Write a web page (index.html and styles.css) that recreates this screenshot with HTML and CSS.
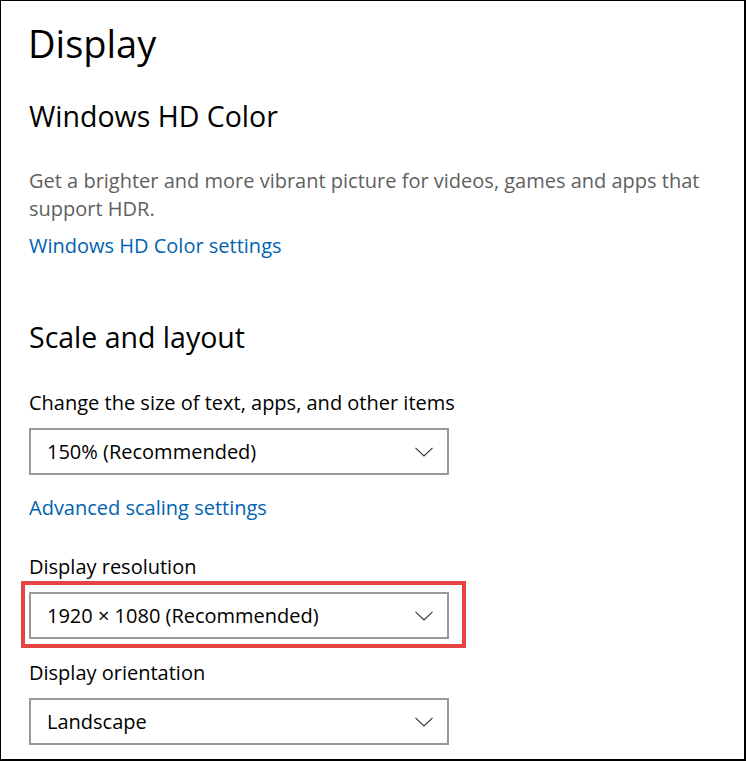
FILE: index.html
```html
<!DOCTYPE html>
<html lang="en">
<head>
<meta charset="utf-8">
<title>Display</title>
<link rel="stylesheet" href="styles.css">
</head>
<body>
<div class="frame">
  <h1 class="page-title">Display</h1>

  <h2 class="section-title hdr-title">Windows HD Color</h2>
  <p class="description">Get a brighter and more vibrant picture for videos, games and apps that support HDR.</p>
  <a class="link hdr-link" href="#">Windows HD Color settings</a>

  <h2 class="section-title scale-title">Scale and layout</h2>
  <div class="label label-first">Change the size of text, apps, and other items</div>
  <div class="dropdown">
    <span class="dropdown-value">150% (Recommended)</span>
    <svg class="chevron" width="18" height="10" viewBox="0 0 18 10"><path d="M0.5 0.8 L9 9 L17.5 0.8" fill="none" stroke="#333" stroke-width="1.1"/></svg>
  </div>
  <a class="link adv-link" href="#">Advanced scaling settings</a>

  <div class="label label-res">Display resolution</div>
  <div class="dropdown dropdown-res">
    <span class="dropdown-value">1920 × 1080 (Recommended)</span>
    <svg class="chevron" width="18" height="10" viewBox="0 0 18 10"><path d="M0.5 0.8 L9 9 L17.5 0.8" fill="none" stroke="#333" stroke-width="1.1"/></svg>
  </div>

  <div class="label label-orient">Display orientation</div>
  <div class="dropdown dropdown-orient">
    <span class="dropdown-value">Landscape</span>
    <svg class="chevron" width="18" height="10" viewBox="0 0 18 10"><path d="M0.5 0.8 L9 9 L17.5 0.8" fill="none" stroke="#333" stroke-width="1.1"/></svg>
  </div>

  <div class="highlight"></div>
</div>
</body>
</html>
```

FILE: styles.css
```css
html, body {
  margin: 0;
  padding: 0;
  background: #fff;
}

.frame {
  position: relative;
  box-sizing: border-box;
  width: 746px;
  height: 761px;
  border-style: solid;
  border-color: #000;
  border-width: 1px 2px 2px 1px;
  padding: 18px 0 0 28px;
  overflow: hidden;
  font-family: "Open Sans", "Noto Sans", sans-serif;
  color: #000;
}

.page-title {
  margin: 0;
  font-size: 38px;
  font-weight: 400;
  line-height: 48px;
  margin-left: -1px;
}

.section-title {
  margin: 0;
  font-size: 28.5px;
  font-weight: 400;
  line-height: 36px;
}

.hdr-title { margin-top: 31px; }
.scale-title { margin-top: 59px; }

.description {
  margin: 33px 0 0 0;
  width: 690px;
  font-size: 20px;
  line-height: 28px;
  color: #5f5f5f;
}

.link {
  display: block;
  width: max-content;
  font-size: 20px;
  line-height: 28px;
  color: #0063b1;
  text-decoration: none;
}

.hdr-link { margin-top: 9px; }
.adv-link { margin-top: 19px; }

.label {
  font-size: 20px;
  line-height: 28px;
  color: #000;
}

.label-first { margin-top: 34px; }
.label-res { margin-top: 31px; }
.label-orient { margin-top: 20px; }

.dropdown {
  box-sizing: border-box;
  width: 420px;
  height: 47px;
  margin-top: 11px;
  border: 2px solid #999;
  padding: 0 14px 0 16px;
  display: flex;
  align-items: center;
  justify-content: space-between;
  font-size: 20px;
  color: #000;
}

.dropdown-orient { margin-top: 11px; }

.chevron {
  display: block;
  flex: none;
}

.highlight {
  position: absolute;
  left: 20px;
  top: 580px;
  width: 445px;
  height: 67px;
  box-sizing: border-box;
  border: 4px solid #e84343;
}
```
